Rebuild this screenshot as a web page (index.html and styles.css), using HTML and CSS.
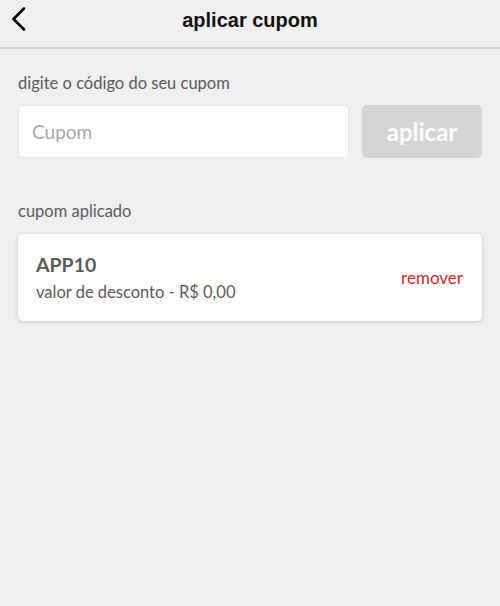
FILE: index.html
```html
<!DOCTYPE html>
<html lang="pt-BR">
<head>
<meta charset="UTF-8" />
<meta name="viewport" content="width=device-width, initial-scale=1" />
<title>Aplicar cupom</title>
<link rel="stylesheet" href="styles.css">
</head>
<body>
  <header class="topbar">
    <button class="back-btn" aria-label="Voltar">
      <svg width="16" height="24" viewBox="0 0 16 24" aria-hidden="true">
        <path d="M13 1.5 L2.5 12 L13 22.5" fill="none" stroke="#000" stroke-width="2.6" stroke-linecap="round" stroke-linejoin="round"/>
      </svg>
    </button>
    <h1 class="topbar-title">aplicar cupom</h1>
  </header>

  <main class="content">
    <label class="field-label" for="coupon-input">digite o código do seu cupom</label>
    <form class="coupon-form">
      <input id="coupon-input" class="coupon-input" type="text" placeholder="Cupom" autocomplete="off" />
      <button class="apply-btn" type="submit" disabled>aplicar</button>
    </form>

    <p class="section-label">cupom aplicado</p>
    <div class="coupon-card">
      <div class="coupon-info">
        <span class="coupon-code">APP10</span>
        <span class="coupon-value">valor de desconto - R$ 0,00</span>
      </div>
      <button class="remove-btn">remover</button>
    </div>
  </main>
</body>
</html>
```

FILE: styles.css
```css
* {
  box-sizing: border-box;
}

body {
  margin: 0;
  background: #f0f0f0;
  font-family: Lato, 'Open Sans', sans-serif;
  color: #555;
}

/* Header */
.topbar {
  position: relative;
  height: 49px;
  border-bottom: 2px solid #d2d2d2;
  display: flex;
  align-items: center;
  justify-content: center;
}

.back-btn {
  position: absolute;
  left: 11px;
  top: 6px;
  background: none;
  border: none;
  padding: 0;
  width: 18px;
  height: 26px;
  display: flex;
  align-items: center;
  cursor: pointer;
}

.topbar-title {
  margin: 0 0 6px;
  font-family: 'Liberation Sans', Arial, sans-serif;
  font-size: 20px;
  font-weight: bold;
  color: #111;
}

/* Content */
.content {
  padding: 24px 18px;
}

.field-label,
.section-label {
  display: block;
  margin: 0;
  font-size: 16.5px;
  color: #5a5a5a;
}

.coupon-form {
  display: flex;
  gap: 13px;
  margin-top: 12px;
}

.coupon-input {
  flex: 1;
  height: 53px;
  border: 1px solid #e6e6e6;
  border-radius: 5px;
  background: #fff;
  padding: 0 13px;
  font-family: inherit;
  font-size: 19px;
  color: #333;
}

.coupon-input::placeholder {
  color: #a8a8a8;
}

.apply-btn {
  width: 120px;
  height: 53px;
  border: none;
  border-radius: 5px;
  background: #d4d4d4;
  color: #fff;
  font-family: inherit;
  font-size: 24px;
  font-weight: bold;
}

.section-label {
  margin-top: 43px;
}

.coupon-card {
  margin-top: 13px;
  background: #fff;
  border-radius: 5px;
  box-shadow: 0 1px 4px rgba(0, 0, 0, 0.18);
  height: 87px;
  padding: 0 19px 0 18px;
  display: flex;
  align-items: center;
  justify-content: space-between;
}

.coupon-info {
  display: flex;
  flex-direction: column;
  gap: 6px;
}

.coupon-code {
  font-size: 19.5px;
  font-weight: bold;
  color: #5a5a5a;
}

.coupon-value {
  font-size: 16.5px;
  color: #5a5a5a;
}

.remove-btn {
  background: none;
  border: none;
  padding: 0;
  font-family: inherit;
  font-size: 17px;
  color: #d7262b;
  cursor: pointer;
}
```
